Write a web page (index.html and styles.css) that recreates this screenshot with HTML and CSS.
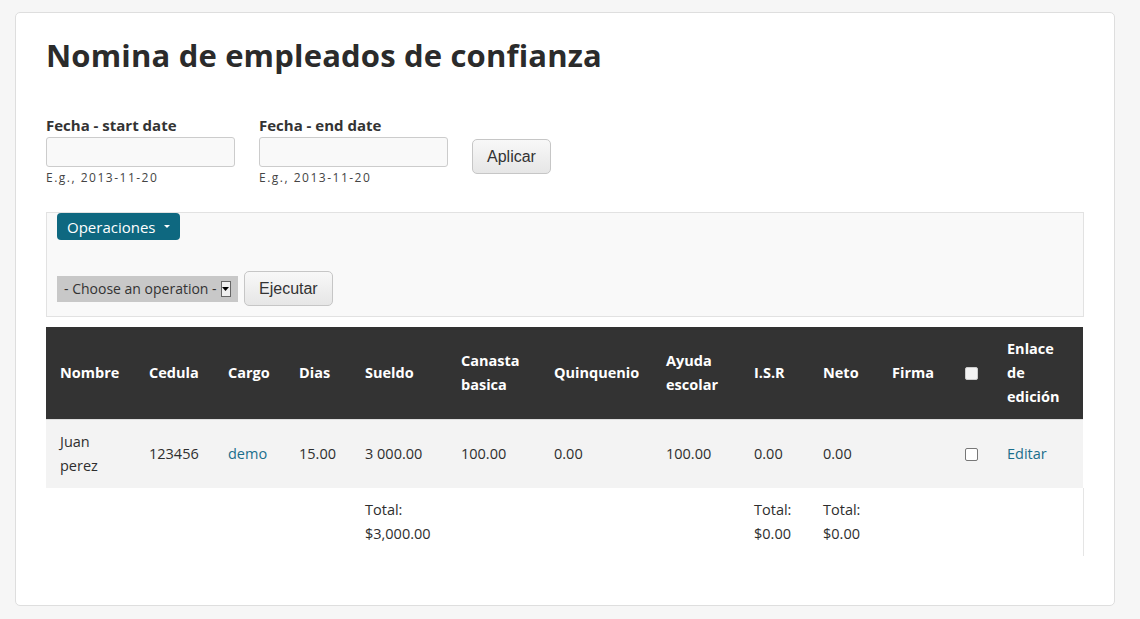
FILE: index.html
```html
<!DOCTYPE html>
<html lang="es">
<head>
<meta charset="utf-8">
<title>Nomina de empleados de confianza</title>
<link rel="stylesheet" href="styles.css">
</head>
<body>
<div class="card">
  <h1 class="title">Nomina de empleados de confianza</h1>

  <form class="filters">
    <div class="field">
      <label class="field-label">Fecha - start date</label>
      <input class="text-input" type="text">
      <div class="field-desc">E.g., 2013-11-20</div>
    </div>
    <div class="field">
      <label class="field-label">Fecha - end date</label>
      <input class="text-input" type="text">
      <div class="field-desc">E.g., 2013-11-20</div>
    </div>
    <div class="field-actions">
      <button type="button" class="btn">Aplicar</button>
    </div>
  </form>

  <div class="ops">
    <div class="ops-toggle">Operaciones <span class="caret"></span></div>
    <div class="ops-row">
      <div class="op-select">- Choose an operation - <span class="op-arrow"><svg width="7" height="4" viewBox="0 0 7 4"><path d="M0 0h7L3.5 4z" fill="#000"/></svg></span></div>
      <button type="button" class="btn">Ejecutar</button>
    </div>
  </div>

  <table class="grid">
    <colgroup>
      <col class="c89"><col class="c79"><col class="c71"><col class="c66">
      <col class="c96"><col class="c93"><col class="c112"><col class="c88">
      <col class="c69"><col class="c69"><col class="c73"><col class="c42">
      <col class="c90">
    </colgroup>
    <thead>
      <tr>
        <th>Nombre</th><th>Cedula</th><th>Cargo</th><th>Dias</th><th>Sueldo</th>
        <th>Canasta basica</th><th>Quinquenio</th><th>Ayuda escolar</th><th>I.S.R</th>
        <th>Neto</th><th>Firma</th><th class="chk-cell"><span class="chk chk-head"></span></th><th>Enlace de edición</th>
      </tr>
    </thead>
    <tbody>
      <tr class="row">
        <td>Juan perez</td><td>123456</td><td><a href="#" class="link">demo</a></td><td>15.00</td><td>3 000.00</td>
        <td>100.00</td><td>0.00</td><td>100.00</td><td>0.00</td><td>0.00</td><td></td>
        <td class="chk-cell"><span class="chk"></span></td><td><a href="#" class="link">Editar</a></td>
      </tr>
      <tr class="totals">
        <td></td><td></td><td></td><td></td><td>Total: $3,000.00</td><td></td><td></td><td></td>
        <td>Total: $0.00</td><td>Total: $0.00</td><td></td><td></td><td class="last"></td>
      </tr>
    </tbody>
  </table>
</div>
</body>
</html>
```
FILE: styles.css
```css
html, body {
  margin: 0;
  padding: 0;
  background: #f6f6f6;
}
body {
  padding: 12px 25px 13px 15px;
  font-family: "Open Sans", "DejaVu Sans", sans-serif;
  color: #2e2e2e;
}
.card {
  background: #fff;
  border: 1px solid #dedede;
  border-radius: 5px;
  padding: 20px 30px 48px 30px;
  height: 524px;
}
.title {
  margin: 0;
  font-size: 31px;
  font-weight: 700;
  line-height: 44px;
  color: #2b2b2b;
  letter-spacing: 0.17px;
}
.filters {
  display: flex;
  align-items: flex-start;
  gap: 24px;
  margin-top: 36px;
}
.field {
  display: flex;
  flex-direction: column;
}
.field-label {
  font-size: 15px;
  font-weight: 700;
  line-height: 24px;
  color: #333;
}
.text-input {
  box-sizing: border-box;
  width: 189px;
  height: 30px;
  margin: 0;
  border: 1px solid #ccc;
  border-radius: 3px;
  background: #f9f9f9;
}
.field-desc {
  font-size: 12px;
  line-height: 22px;
  letter-spacing: 1.5px;
  color: #444;
}
.field-actions {
  padding-top: 26px;
}
.btn {
  font-family: "Liberation Sans", Arial, sans-serif;
  font-size: 16px;
  color: #333;
  height: 35px;
  padding: 0 14px;
  border: 1px solid #c6c6c6;
  border-radius: 5px;
  background: linear-gradient(#f8f8f8, #e6e6e6);
}
.ops {
  margin-top: 23px;
  background: #f9f9f9;
  border: 1px solid #e2e2e2;
  padding: 0 10px 10px 10px;
  box-sizing: border-box;
  height: 105px;
}
.ops-toggle {
  display: inline-flex;
  align-items: center;
  gap: 8px;
  background: #0e6880;
  color: #fff;
  font-size: 15px;
  height: 27px;
  padding: 0 10px;
  border-radius: 4px;
}
.caret {
  width: 0;
  height: 0;
  border-left: 3px solid transparent;
  border-right: 3px solid transparent;
  border-top: 3px solid #fff;
}
.ops-row {
  display: flex;
  align-items: center;
  gap: 6px;
  margin-top: 31px;
}
.op-select {
  display: flex;
  align-items: center;
  gap: 4px;
  height: 26px;
  width: 181px;
  box-sizing: border-box;
  background: #c8c8c8;
  color: #333;
  font-size: 14px;
  padding: 0 3px 0 7px;
  white-space: nowrap;
}
.op-arrow {
  display: inline-flex;
  align-items: center;
  justify-content: center;
  width: 10px;
  height: 16px;
  background: #f0f0f0;
  border: 1px solid #666;
  box-sizing: border-box;
}
.grid {
  margin-top: 10px;
  width: 1037px;
  table-layout: fixed;
  border-collapse: collapse;
  font-size: 14.5px;
  line-height: 24px;
}
.c89 { width: 89px; }
.c79 { width: 79px; }
.c71 { width: 71px; }
.c66 { width: 66px; }
.c96 { width: 96px; }
.c93 { width: 93px; }
.c112 { width: 112px; }
.c88 { width: 88px; }
.c69 { width: 69px; }
.c73 { width: 73px; }
.c42 { width: 42px; }
.c90 { width: 90px; }
.grid th, .grid td {
  text-align: left;
  vertical-align: middle;
  padding: 10px 16px 10px 14px;
  overflow: visible;
}
.grid thead th {
  background: #333;
  color: #fff;
  font-weight: 700;
  height: 71px;
}
.row td {
  background: #f3f3f3;
  border-top: 1px solid #dedede;
}
.totals td {
  background: #fff;
}
.totals td.last {
  border-right: 1px solid #e5e5e5;
}
.link {
  color: #1a6e8c;
  text-decoration: none;
}
.grid .chk-cell {
  padding-left: 14px;
  padding-right: 0;
}
.chk {
  display: block;
  width: 11px;
  height: 11px;
  border: 1px solid #777;
  border-radius: 2px;
  background: #fff;
}
.chk-head {
  background: #f2f2f2;
  border-color: #ccc;
}
```
